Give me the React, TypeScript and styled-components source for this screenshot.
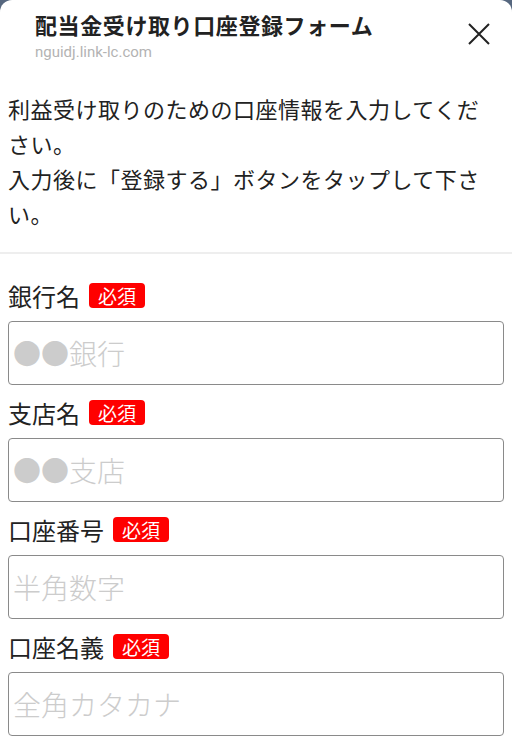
import React from "react";
import styled, { createGlobalStyle } from "styled-components";

const Global = createGlobalStyle`
  html, body { margin: 0; padding: 0; background: #56677f; }
  body { font-family: "Noto Sans CJK JP", "Noto Sans", sans-serif; }
  * { box-sizing: border-box; }
`;

const Sheet = styled.div`
  background: #fff;
  border-radius: 12px 12px 0 0;
  min-height: 751px;
  overflow: hidden;
`;

const Header = styled.header`
  display: flex;
  align-items: flex-start;
  justify-content: space-between;
  padding: 8px 20px 0 35px;
  height: 80px;
`;

const TitleBlock = styled.div`
  display: flex;
  flex-direction: column;
  gap: 3px;
`;

const Title = styled.h1`
  margin: 0;
  font-size: 22px;
  line-height: 32px;
  font-weight: 700;
  color: #222;
  letter-spacing: 0.6px;
`;

const Url = styled.div`
  font-family: Roboto, "Liberation Sans", sans-serif;
  font-size: 15px;
  line-height: 19px;
  color: #b3b3b3;
`;

const CloseButton = styled.button`
  border: none;
  background: none;
  padding: 0;
  margin-top: 13px;
  width: 26px;
  height: 26px;
  display: flex;
  align-items: center;
  justify-content: center;
  color: #222;
`;

const Description = styled.p`
  margin: 0;
  padding: 11px 14px 21px 8px;
  font-size: 22px;
  line-height: 35px;
  letter-spacing: 0.5px;
  color: #222;
  border-bottom: 2px solid #eeeeee;
`;

const Form = styled.form`
  display: flex;
  flex-direction: column;
  padding: 25px 8px 0 8px;
`;

const Field = styled.div`
  display: flex;
  flex-direction: column;
  gap: 9px;
  margin-bottom: 11px;
`;

const LabelRow = styled.label`
  display: flex;
  align-items: center;
  gap: 9px;
  font-size: 24px;
  line-height: 33px;
  color: #222;
`;

const Badge = styled.span`
  background: #ff0000;
  color: #fff;
  font-size: 19px;
  line-height: 25px;
  padding: 0 9px;
  border-radius: 4px;
`;

const Input = styled.input`
  width: 100%;
  height: 64px;
  border: 1.5px solid #8a8a8a;
  border-radius: 4px;
  padding: 0 4px;
  font-family: "Noto Sans CJK JP", sans-serif;
  font-size: 28px;
  font-weight: 300;
  color: #222;
  background: #fff;
  &::placeholder { color: #cccccc; }
`;

const fields = [
  { label: "銀行名", placeholder: "●●銀行" },
  { label: "支店名", placeholder: "●●支店" },
  { label: "口座番号", placeholder: "半角数字" },
  { label: "口座名義", placeholder: "全角カタカナ" },
];

export default function App() {
  return (
    <>
      <Global />
      <Sheet>
        <Header>
          <TitleBlock>
            <Title>配当金受け取り口座登録フォーム</Title>
            <Url>nguidj.link-lc.com</Url>
          </TitleBlock>
          <CloseButton aria-label="close">
            <svg width="26" height="26" viewBox="0 0 26 26">
              <path d="M3 3L23 23M23 3L3 23" stroke="#222" strokeWidth="2" fill="none" />
            </svg>
          </CloseButton>
        </Header>
        <Description>
          利益受け取りのための口座情報を入力してください。
          <br />
          入力後に「登録する」ボタンをタップして下さい。
        </Description>
        <Form>
          {fields.map((f) => (
            <Field key={f.label}>
              <LabelRow>
                {f.label}
                <Badge>必須</Badge>
              </LabelRow>
              <Input placeholder={f.placeholder} />
            </Field>
          ))}
        </Form>
      </Sheet>
    </>
  );
}
